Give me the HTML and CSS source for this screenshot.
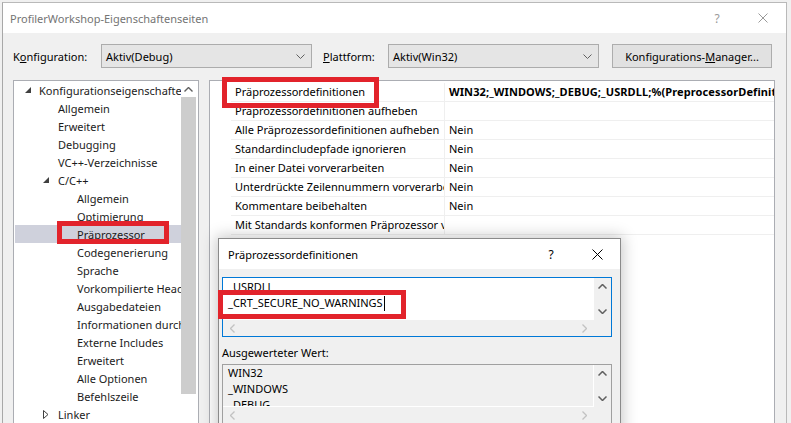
FILE: index.html
```html
<!DOCTYPE html>
<html lang="de">
<head>
<meta charset="utf-8">
<title>ProfilerWorkshop-Eigenschaftenseiten</title>
<link rel="stylesheet" href="styles.css">
</head>
<body>
<div class="window">
  <div class="titlebar">
    <span class="title">ProfilerWorkshop-Eigenschaftenseiten</span>
    <span class="capbtn help">?</span>
    <span class="capbtn"><svg width="10" height="10" viewBox="0 0 10 10"><path d="M0.5 0.5L9.5 9.5M9.5 0.5L0.5 9.5"/></svg></span>
  </div>
  <div class="toolbar">
    <span class="lbl lbl1">K<u>o</u>nfiguration:</span>
    <div class="combo"><span>Aktiv(Debug)</span><svg class="chev" width="9" height="5" viewBox="0 0 9 5"><path d="M0.5 0.5L4.5 4.5L8.5 0.5"/></svg></div>
    <span class="lbl lbl2"><u>P</u>lattform:</span>
    <div class="combo"><span>Aktiv(Win32)</span><svg class="chev" width="9" height="5" viewBox="0 0 9 5"><path d="M0.5 0.5L4.5 4.5L8.5 0.5"/></svg></div>
    <div class="btn">Konfigurations-<u>M</u>anager...</div>
  </div>
  <div class="main">
    <div class="tree">
      <div class="tree-list">
        <div class="node l1"><svg class="exp" width="6" height="6" viewBox="0 0 6 6"><path d="M6 0L6 6L0 6Z"/></svg><span>Konfigurationseigenschaften</span></div>
        <div class="node l2">Allgemein</div>
        <div class="node l2">Erweitert</div>
        <div class="node l2">Debugging</div>
        <div class="node l2">VC++-Verzeichnisse</div>
        <div class="node l2t"><svg class="exp" width="6" height="6" viewBox="0 0 6 6"><path d="M6 0L6 6L0 6Z"/></svg><span>C/C++</span></div>
        <div class="node l3">Allgemein</div>
        <div class="node l3">Optimierung</div>
        <div class="node l3 sel">Präprozessor</div>
        <div class="node l3">Codegenerierung</div>
        <div class="node l3">Sprache</div>
        <div class="node l3">Vorkompilierte Header</div>
        <div class="node l3">Ausgabedateien</div>
        <div class="node l3">Informationen durchsuchen</div>
        <div class="node l3">Externe Includes</div>
        <div class="node l3">Erweitert</div>
        <div class="node l3">Alle Optionen</div>
        <div class="node l3">Befehlszeile</div>
        <div class="node l2t"><svg class="col" width="6" height="9" viewBox="0 0 6 9"><path d="M0.5 0.5L5 4.5L0.5 8.5Z"/></svg><span>Linker</span></div>
      </div>
      <div class="tree-scroll">
        <div class="sb-btn"><svg width="9" height="5" viewBox="0 0 9 5"><path d="M0.5 4.5L4.5 0.5L8.5 4.5"/></svg></div>
        <div class="thumb"></div>
      </div>
    </div>
    <div class="grid">
      <div class="prop"><div class="pname">Präprozessordefinitionen</div><div class="pval bold">WIN32;_WINDOWS;_DEBUG;_USRDLL;%(PreprocessorDefinitions)</div></div>
      <div class="prop"><div class="pname">Präprozessordefinitionen aufheben</div><div class="pval"></div></div>
      <div class="prop"><div class="pname">Alle Präprozessordefinitionen aufheben</div><div class="pval">Nein</div></div>
      <div class="prop"><div class="pname">Standardincludepfade ignorieren</div><div class="pval">Nein</div></div>
      <div class="prop"><div class="pname">In einer Datei vorverarbeiten</div><div class="pval">Nein</div></div>
      <div class="prop"><div class="pname">Unterdrückte Zeilennummern vorverarbeiten</div><div class="pval">Nein</div></div>
      <div class="prop"><div class="pname">Kommentare beibehalten</div><div class="pval">Nein</div></div>
      <div class="prop"><div class="pname">Mit Standards konformen Präprozessor verwenden</div><div class="pval"></div></div>
    </div>
  </div>
</div>

<div class="dialog">
  <div class="dtitlebar">
    <span class="dtitle">Präprozessordefinitionen</span>
    <span class="capbtn dhelp">?</span>
    <span class="capbtn dclose"><svg width="11" height="11" viewBox="0 0 11 11"><path d="M0.5 0.5L10.5 10.5M10.5 0.5L0.5 10.5"/></svg></span>
  </div>
  <div class="dbody">
    <div class="edit edit-active">
      <div class="edit-content">
        <div class="edit-clip">
          <div class="edit-text">
            <div>_USRDLL</div>
            <div>_CRT_SECURE_NO_WARNINGS<span class="caret"></span></div>
          </div>
        </div>
      </div>
      <div class="vsb">
        <span class="arr"><svg width="9" height="5" viewBox="0 0 9 5"><path d="M0.5 4.5L4.5 0.5L8.5 4.5"/></svg></span>
        <span class="arr"><svg width="9" height="5" viewBox="0 0 9 5"><path d="M0.5 0.5L4.5 4.5L8.5 0.5"/></svg></span>
      </div>
      <div class="hsb">
        <svg width="5" height="9" viewBox="0 0 5 9"><path d="M4.5 0.5L0.5 4.5L4.5 8.5"/></svg>
        <svg width="5" height="9" viewBox="0 0 5 9"><path d="M0.5 0.5L4.5 4.5L0.5 8.5"/></svg>
      </div>
      <div class="corner"></div>
    </div>
    <div class="elabel">Ausgewerteter Wert:</div>
    <div class="edit edit-ro">
      <div class="edit-content">
        <div class="edit-text">
          <div>WIN32</div>
          <div>_WINDOWS</div>
          <div>_DEBUG</div>
        </div>
      </div>
      <div class="vsb">
        <span class="arr"><svg width="9" height="5" viewBox="0 0 9 5"><path d="M0.5 4.5L4.5 0.5L8.5 4.5"/></svg></span>
        <span class="arr"><svg width="9" height="5" viewBox="0 0 9 5"><path d="M0.5 0.5L4.5 4.5L8.5 0.5"/></svg></span>
      </div>
      <div class="hsb">
        <svg width="5" height="9" viewBox="0 0 5 9"><path d="M4.5 0.5L0.5 4.5L4.5 8.5"/></svg>
        <svg width="5" height="9" viewBox="0 0 5 9"><path d="M0.5 0.5L4.5 4.5L0.5 8.5"/></svg>
      </div>
      <div class="corner"></div>
    </div>
  </div>
</div>

<div class="mark mark-tree"></div>
<div class="mark mark-prop"></div>
<div class="mark mark-edit"></div>
</body>
</html>
```

FILE: styles.css
```css
* { box-sizing: border-box; }
html, body { margin: 0; height: 423px; overflow: hidden; }
body {
  background: #f0f0f0;
  padding: 2px 0 0 2px;
  font-family: "Noto Sans", "Open Sans", sans-serif;
  font-size: 11px;
  color: #000;
  position: relative;
}
u { text-decoration: underline; text-underline-offset: 1px; }

.window {
  width: 785px;
  height: 440px;
  border: 1px solid #b9b9b9;
  border-left-color: #a8a8a8;
  background: #f0f0f0;
  display: flex;
  flex-direction: column;
}

.titlebar {
  height: 30px;
  flex: none;
  background: #fff;
  display: flex;
  align-items: center;
  padding-left: 7px;
  color: #747474;
}
.title { flex: 1; }
.capbtn {
  width: 46px;
  height: 30px;
  display: flex;
  align-items: center;
  justify-content: center;
}
.help { font-size: 12px; color: #9a9a9a; }
.capbtn svg path { stroke: #9a9a9a; stroke-width: 1; fill: none; }

.toolbar {
  flex: none;
  display: flex;
  align-items: center;
  padding: 11px 0 0 10px;
  height: 35px;
}
.lbl { color: #000; }
.lbl1 { width: 88px; }
.lbl2 { width: 65px; margin-left: 11px; }
.combo {
  width: 211px;
  height: 24px;
  border: 1px solid #acacac;
  background: #e5e5e5;
  display: flex;
  align-items: center;
  justify-content: space-between;
  padding: 0 6px 0 4px;
}
.chev path { stroke: #606060; stroke-width: 1; fill: none; }
.btn {
  margin-left: 13px;
  width: 160px;
  height: 24px;
  border: 1px solid #adadad;
  background: #e1e1e1;
  display: flex;
  align-items: center;
  justify-content: center;
}

.main {
  flex: 1;
  min-height: 0;
  display: flex;
  gap: 10px;
  margin-top: 12px;
  padding-left: 10px;
}

.tree {
  width: 186px;
  border: 1px solid #abadb3;
  background: #fff;
  display: flex;
}
.tree-list { flex: 1; min-width: 0; overflow: hidden; color: #1b1b1b; }
.node {
  height: 18px;
  display: flex;
  align-items: center;
  white-space: nowrap;
}
.node span { white-space: nowrap; }
.l1 { padding-left: 11px; }
.l1 .exp { margin-right: 8px; flex: none; }
.l2 { padding-left: 44px; }
.l2t { padding-left: 29px; }
.l2t svg { margin-right: 9px; flex: none; }
.l3 { padding-left: 63px; }
.exp path { fill: #404040; }
.col path { fill: none; stroke: #404040; stroke-width: 1; }
.sel { background: #cfd1dc; margin-left: 1px; padding-left: 62px; }

.tree-scroll {
  width: 17px;
  flex: none;
  display: flex;
  flex-direction: column;
}
.sb-btn {
  height: 16px;
  display: flex;
  align-items: center;
  justify-content: center;
  padding-right: 2px;
}
.sb-btn path { stroke: #606060; stroke-width: 1.4; fill: none; }
.thumb { height: 297px; background: #cdcdcd; margin-right: 2px; }

.grid {
  width: 566px;
  border: 1px solid #abadb3;
  background: #fff;
  padding: 2px 0 0 21px;
}
.prop {
  height: 19px;
  display: flex;
  border-bottom: 1px solid #efefef;
  white-space: nowrap;
}
.pname {
  width: 214px;
  flex: none;
  padding-left: 4px;
  border-right: 1px solid #efefef;
  overflow: hidden;
  line-height: 18px;
}
.pval { flex: 1; min-width: 0; padding-left: 4px; overflow: hidden; line-height: 18px; }
.bold { font-weight: 700; letter-spacing: 0.1px; }

/* dialog window floating over the property page */
.dialog {
  position: absolute;
  left: 218px;
  top: 238px;
  width: 403px;
  height: 200px;
  border: 1px solid #8a8a8a;
  background: #f0f0f0;
  box-shadow: 0 0 14px 2px rgba(0, 0, 0, 0.22);
  display: flex;
  flex-direction: column;
}
.dtitlebar {
  height: 30px;
  flex: none;
  background: #fff;
  display: flex;
  align-items: center;
  padding-left: 9px;
}
.dtitle { flex: 1; }
.dhelp { font-size: 12px; color: #000; }
.dclose svg path { stroke: #000; }

.dbody { padding: 8px 8px 0 3px; }
.edit {
  display: grid;
  grid-template-columns: 1fr 17px;
  width: 390px;
}
.edit-active {
  height: 60px;
  border: 1px solid #0078d7;
  grid-template-rows: 42px 16px;
}
.edit-ro {
  height: 61px;
  border: 1px solid #a0a0a0;
  grid-template-rows: 42px 17px;
  margin-top: 3px;
}
.edit-content { overflow: hidden; }
.edit-active .edit-content { background: #fff; padding-top: 5px; }
.edit-clip { height: 37px; overflow: hidden; }
.edit-active .edit-text { margin-top: -4px; }
.edit-ro .edit-content { background: #f0f0f0; border-right: 1px solid #fff; border-bottom: 1px solid #fff; }
.edit-text { padding-left: 5px; line-height: 16px; white-space: nowrap; }
.caret {
  display: inline-block;
  width: 1px;
  height: 15px;
  background: #000;
  vertical-align: -4px;
  margin-left: 1px;
}
.vsb {
  background: #f0f0f0;
  display: flex;
  flex-direction: column;
  justify-content: space-between;
}
.arr { height: 17px; display: flex; align-items: center; justify-content: center; }
.arr path { stroke: #606060; stroke-width: 1.5; fill: none; }
.hsb {
  background: #f0f0f0;
  display: flex;
  align-items: center;
  justify-content: space-between;
  padding: 0 7px 0 7px;
}
.hsb path { stroke: #c2c2c2; stroke-width: 1.3; fill: none; }
.corner { background: #f0f0f0; }
.elabel { margin-top: 8px; line-height: 16px; }

/* red annotation frames drawn over the screenshot */
.mark {
  position: absolute;
  border: 5px solid #e2232b;
}
.mark-tree { left: 57px; top: 221px; width: 112px; height: 23px; }
.mark-prop { left: 222px; top: 77px; width: 157px; height: 31px; }
.mark-edit { left: 218px; top: 290px; width: 188px; height: 29px; }
```
